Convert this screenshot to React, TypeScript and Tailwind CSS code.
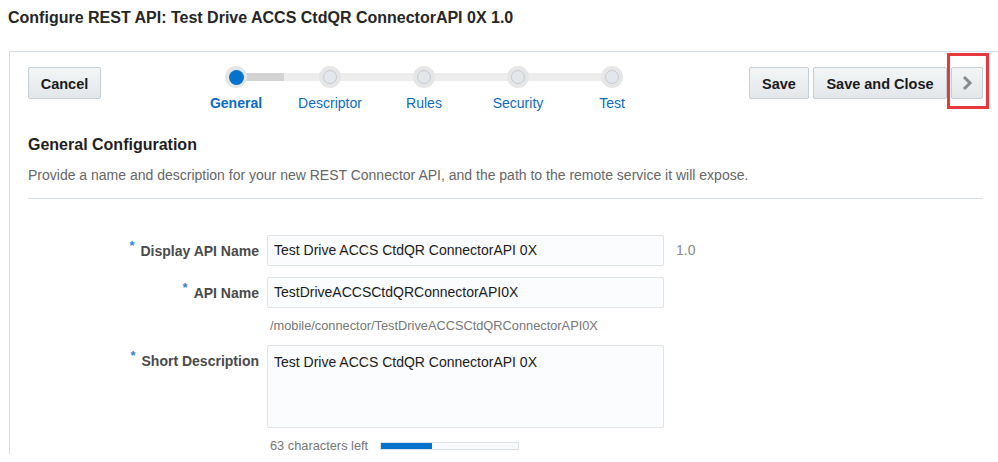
import React from "react";

const steps = ["General", "Descriptor", "Rules", "Security", "Test"];

const Btn = ({ children, w }: { children: React.ReactNode; w: string }) => (
  <button
    className={`${w} h-8 rounded-[2px] border border-[#c4ced7] bg-gradient-to-b from-[#f3f5f6] to-[#e3e7ea] text-[14.5px] leading-none pt-[2px] font-bold text-[#1a1a1a] flex items-center justify-center`}
  >
    {children}
  </button>
);

const Label = ({ text }: { text: string }) => (
  <div className="flex justify-end items-start pr-2 text-[14px] font-bold text-[#4a4a4a]">
    <span className="text-[#2f86d6] text-[13px] leading-none mr-[6px] mt-[4px]">*</span>
    <span className="leading-5 pt-[6px]">{text}</span>
  </div>
);

export default function App() {
  return (
    <div className="w-[998px] h-[462px] overflow-hidden bg-white font-['Liberation_Sans',Arial,sans-serif]">
      <h1 className="pl-2 pt-2 text-[16px] leading-5 font-bold text-[#262626]">
        Configure REST API: Test Drive ACCS CtdQR ConnectorAPI 0X 1.0
      </h1>

      <div className="ml-[9px] mt-[23px] border-l border-t border-[#d6dfe6] pl-[18px] pr-[15px]">
        {/* top bar */}
        <div className="flex items-start pt-[15px] h-[66px]">
          <Btn w="w-[73px]">Cancel</Btn>

          <div className="relative ml-[88px] flex -mt-[1px]">
            <div className="absolute left-[47px] top-[7px] h-[8px] w-[375px] bg-[#ededed]" />
            <div className="absolute left-[47px] top-[7px] h-[8px] w-[48px] bg-[#d3d3d3]" />
            {steps.map((s, i) => (
              <div key={s} className="relative w-[94px] flex flex-col items-center">
                <div className="w-[22px] h-[22px] rounded-full bg-[#e6e6e6] flex items-center justify-center">
                  {i === 0 ? (
                    <div className="w-[15px] h-[15px] rounded-full bg-[#0572ce]" />
                  ) : (
                    <div className="w-[14px] h-[14px] rounded-full bg-[#e3e7eb] border border-[#c3cbd3]" />
                  )}
                </div>
                <div
                  className={`mt-[5px] text-[14px] leading-5 text-[#0b6bc2] ${i === 0 ? "font-bold" : ""}`}
                >
                  {s}
                </div>
              </div>
            ))}
          </div>

          <div className="ml-auto flex gap-1">
            <Btn w="w-[60px]">Save</Btn>
            <Btn w="w-[134px]">Save and Close</Btn>
            <div className="relative">
              <Btn w="w-[32px]">
                <svg width="12" height="16" viewBox="0 0 12 16" className="-mt-[2px]">
                  <polyline points="3,2 9,8 3,14" fill="none" stroke="#8a8a8a" strokeWidth="3" />
                </svg>
              </Btn>
              <div className="absolute -left-[4px] -top-[14px] w-[42px] h-[56px] border-[3px] border-[#e8383d]" />
            </div>
          </div>
        </div>

        {/* section heading */}
        <div className="pt-[17px]">
          <h2 className="text-[16px] leading-5 font-bold text-[#1f1f1f]">General Configuration</h2>
          <p className="mt-[10px] text-[14px] leading-5 text-[#666]">
            Provide a name and description for your new REST Connector API, and the path to the remote service it will expose.
          </p>
          <div className="mt-[13px] border-t border-[#d6dfe6]" />
        </div>

        {/* form */}
        <div className="pt-[36px] grid grid-cols-[239px_397px_auto] items-start">
          <Label text="Display API Name" />
          <div className="h-[31px] border border-[#dfe4e7] rounded-[2px] bg-[#fbfcfd] px-[6px] flex items-center text-[14px] text-[#1a1a1a]">
            Test Drive ACCS CtdQR ConnectorAPI 0X
          </div>
          <div className="pl-3 pt-[5px] text-[14px] text-[#8a8a8a]">1.0</div>

          <div className="col-span-3 h-[11px]" />

          <Label text="API Name" />
          <div className="h-[31px] border border-[#dfe4e7] rounded-[2px] bg-[#fbfcfd] px-[6px] flex items-center text-[14px] text-[#1a1a1a]">
            TestDriveACCSCtdQRConnectorAPI0X
          </div>
          <div />

          <div />
          <div className="pl-[3px] pt-[10px] text-[12.8px] leading-4 text-[#777]">
            /mobile/connector/TestDriveACCSCtdQRConnectorAPI0X
          </div>
          <div />

          <div className="col-span-3 h-[11px]" />

          <Label text="Short Description" />
          <div className="h-[83px] border border-[#dfe4e7] rounded-[2px] bg-[#fbfcfd] px-[6px] pt-[6px] text-[14px] leading-5 text-[#1a1a1a]">
            Test Drive ACCS CtdQR ConnectorAPI 0X
          </div>
          <div />

          <div />
          <div className="flex items-center pl-[3px] pt-[10px] text-[12.8px] leading-4 text-[#777]">
            <span>63 characters left</span>
            <div className="ml-[12px] w-[139px] h-[8px] border border-[#dde3e8] bg-[#f7f9fa]">
              <div className="h-full w-[51px] bg-[#0572ce]" />
            </div>
          </div>
          <div />
        </div>
      </div>
    </div>
  );
}
